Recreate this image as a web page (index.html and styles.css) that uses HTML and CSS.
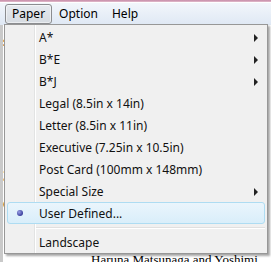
FILE: index.html
```html
<!DOCTYPE html>
<html lang="en">
<head>
  <meta charset="UTF-8">
  <title>Paper menu</title>
  <link rel="stylesheet" href="styles.css">
</head>
<body>
  <div class="window">
    <div class="titleedge"></div>
    <ul class="menubar">
      <li class="open">Paper</li>
      <li>Option</li>
      <li>Help</li>
    </ul>
    <div class="doc">
      <p class="line l1">s</p>
      <p class="line l2">3.</p>
      <p class="line l3">e</p>
      <p class="byline">Haruna Matsunaga and Yoshimi</p>
    </div>

    <ul class="popup">
      <li class="sub">A*</li>
      <li class="sub">B*E</li>
      <li class="sub">B*J</li>
      <li>Legal (8.5in x 14in)</li>
      <li>Letter (8.5in x 11in)</li>
      <li>Executive (7.25in x 10.5in)</li>
      <li>Post Card (100mm x 148mm)</li>
      <li class="sub">Special Size</li>
      <li class="hover checked">User Defined...</li>
      <li class="sep"></li>
      <li>Landscape</li>
    </ul>
  </div>
</body>
</html>
```

FILE: styles.css
```css
*{margin:0;padding:0;}
body{width:271px;height:262px;overflow:hidden;background:#fff;font-family:"Noto Sans","Open Sans",sans-serif;}
.window{position:relative;width:271px;height:262px;display:flex;flex-direction:column;}
.titleedge{height:2px;background:linear-gradient(#c58aa6,#e2bccd);}
.menubar{
  height:22px;
  display:flex;
  align-items:center;
  padding-left:5px;
  list-style:none;
  background:linear-gradient(#f2f6fb,#dfe8f4);
  border-top:1px solid #fff;
  font-size:12px;
  color:#000;
}
.menubar li{padding:0 6px;height:18px;line-height:17px;border:1px solid transparent;}
.menubar li.open{
  border-color:#8b8d90;
  border-radius:3px;
  background:linear-gradient(#e6eaef,#d6dbe1);
  box-shadow:inset 0 0 0 1px rgba(255,255,255,.5);
}
.doc{flex:1;position:relative;border-left:3px solid #c9c9c9;font-family:"Liberation Serif",serif;font-size:15px;}
.line{position:absolute;left:0;}
.l1{top:8px;}
.l2{top:143px;}
.l3{top:170px;}
.byline{position:absolute;top:227px;left:88px;white-space:nowrap;font-size:13px;}

.popup{
  position:absolute;
  left:4px;
  top:24px;
  width:258px;
  list-style:none;
  background:#f0f0f0 linear-gradient(90deg,transparent 29px,#e2e3e3 29px,#e2e3e3 30px,#fff 30px,#fff 31px,transparent 31px);
  border:1px solid #979797;
  padding:1px 2px 0 2px;
  box-shadow:2px 2px 2px rgba(0,0,0,.35);
  font-size:12px;
  color:#111;
}
.popup li{
  position:relative;
  height:22px;
  line-height:21px;
  padding-left:31px;
  border:1px solid transparent;
  border-radius:3px;
  box-sizing:border-box;
  white-space:nowrap;
}
.popup li.sub::after{
  content:"";
  position:absolute;
  right:6px;
  top:7px;
  border-left:4px solid #222;
  border-top:4px solid transparent;
  border-bottom:4px solid transparent;
}
.popup li.hover{
  border-color:#aedcf2;
  background:linear-gradient(#eaf5fc,#d9eefa);
}
.popup li.checked::before{
  content:"";
  position:absolute;
  left:9px;
  top:7px;
  width:6px;
  height:6px;
  border-radius:50%;
  background:radial-gradient(circle at 35% 35%,#9aa0e6,#3b3f9c 70%);
}
.popup li.sep{
  height:7px;
  border:0;
  margin-left:29px;
  padding:0;
  background:linear-gradient(transparent 3px,#e0e0e0 3px,#e0e0e0 4px,#fff 4px,#fff 5px,transparent 5px);
}
```
